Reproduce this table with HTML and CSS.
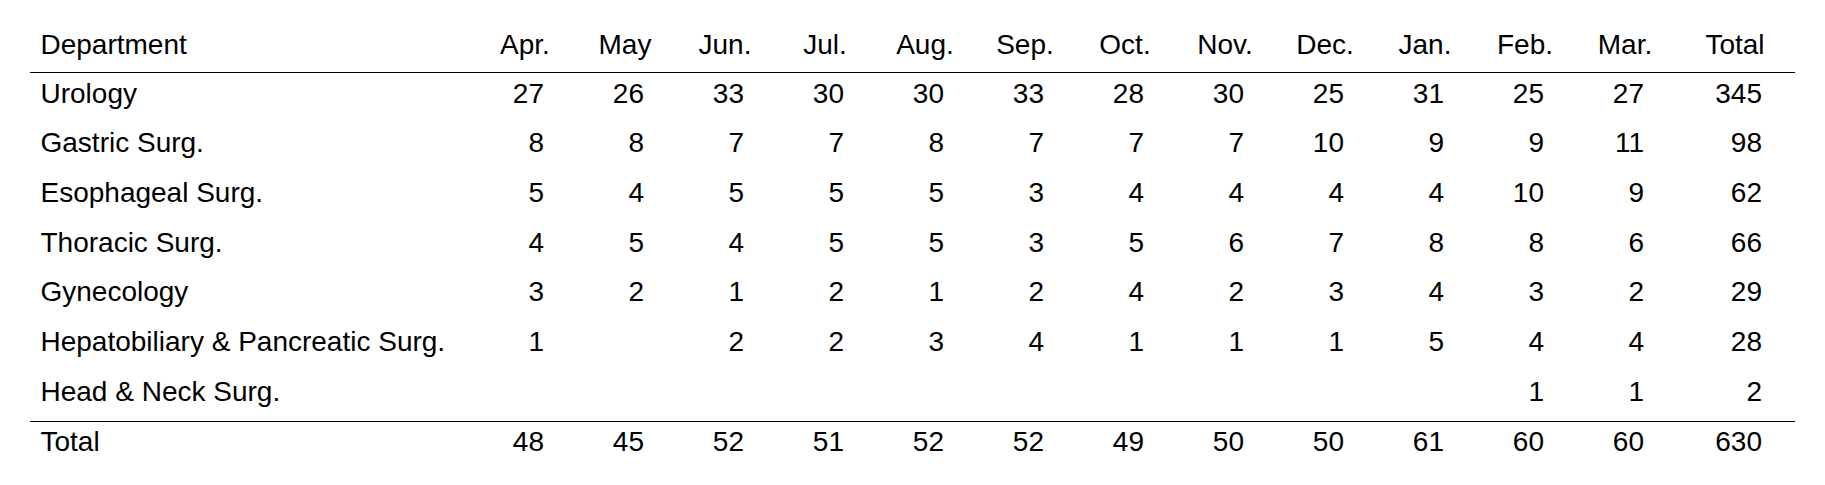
FILE: index.html
```html
<!DOCTYPE html>
<html lang="en">
<head>
<meta charset="utf-8">
<title>Department monthly counts</title>
<link rel="stylesheet" href="styles.css">
</head>
<body>
<div class="page">
<table class="summary">
  <colgroup>
    <col class="c-dept">
    <col class="c-month"><col class="c-month"><col class="c-month"><col class="c-month">
    <col class="c-month"><col class="c-month"><col class="c-month"><col class="c-month">
    <col class="c-month"><col class="c-month"><col class="c-month"><col class="c-month">
    <col class="c-total">
  </colgroup>
  <thead>
    <tr>
      <th class="dept">Department</th>
      <th>Apr.</th><th>May</th><th>Jun.</th><th>Jul.</th><th>Aug.</th><th>Sep.</th>
      <th>Oct.</th><th>Nov.</th><th>Dec.</th><th>Jan.</th><th>Feb.</th><th>Mar.</th>
      <th>Total</th>
    </tr>
  </thead>
  <tbody>
    <tr><td class="dept">Urology</td><td>27</td><td>26</td><td>33</td><td>30</td><td>30</td><td>33</td><td>28</td><td>30</td><td>25</td><td>31</td><td>25</td><td>27</td><td class="tot">345</td></tr>
    <tr><td class="dept">Gastric Surg.</td><td>8</td><td>8</td><td>7</td><td>7</td><td>8</td><td>7</td><td>7</td><td>7</td><td>10</td><td>9</td><td>9</td><td>11</td><td class="tot">98</td></tr>
    <tr><td class="dept">Esophageal Surg.</td><td>5</td><td>4</td><td>5</td><td>5</td><td>5</td><td>3</td><td>4</td><td>4</td><td>4</td><td>4</td><td>10</td><td>9</td><td class="tot">62</td></tr>
    <tr><td class="dept">Thoracic Surg.</td><td>4</td><td>5</td><td>4</td><td>5</td><td>5</td><td>3</td><td>5</td><td>6</td><td>7</td><td>8</td><td>8</td><td>6</td><td class="tot">66</td></tr>
    <tr><td class="dept">Gynecology</td><td>3</td><td>2</td><td>1</td><td>2</td><td>1</td><td>2</td><td>4</td><td>2</td><td>3</td><td>4</td><td>3</td><td>2</td><td class="tot">29</td></tr>
    <tr><td class="dept">Hepatobiliary &amp; Pancreatic Surg.</td><td>1</td><td></td><td>2</td><td>2</td><td>3</td><td>4</td><td>1</td><td>1</td><td>1</td><td>5</td><td>4</td><td>4</td><td class="tot">28</td></tr>
    <tr><td class="dept">Head &amp; Neck Surg.</td><td></td><td></td><td></td><td></td><td></td><td></td><td></td><td></td><td></td><td></td><td>1</td><td>1</td><td class="tot">2</td></tr>
  </tbody>
  <tfoot>
    <tr><td class="dept">Total</td><td>48</td><td>45</td><td>52</td><td>51</td><td>52</td><td>52</td><td>49</td><td>50</td><td>50</td><td>61</td><td>60</td><td>60</td><td class="tot">630</td></tr>
  </tfoot>
</table>
</div>
</body>
</html>
```
FILE: styles.css
```css
html, body {
  margin: 0;
  padding: 0;
  background: #ffffff;
}

.page {
  padding: 23.6px 0 0 30px;
}

.summary {
  border-collapse: collapse;
  table-layout: fixed;
  width: 1765px;
  font-family: "Liberation Sans", Arial, Helvetica, sans-serif;
  font-size: 28px;
  line-height: 30px;
  color: #000000;
}

.c-dept { width: 445px; }
.c-month { width: 100px; }
.c-total { width: 120px; }

.summary th {
  font-weight: normal;
  text-align: center;
  padding: 6px 0 12.7px 0;
  white-space: nowrap;
}

.summary thead tr {
  border-bottom: 1px solid #000000;
}

.summary td {
  text-align: right;
  padding: 5.3px 31px 14.4px 0;
  white-space: nowrap;
}

.summary td.tot {
  padding-right: 33px;
}

.summary .dept {
  text-align: left;
  padding-left: 10.5px;
  padding-right: 0;
}

.summary tfoot tr {
  border-top: 1px solid #000000;
}
```
